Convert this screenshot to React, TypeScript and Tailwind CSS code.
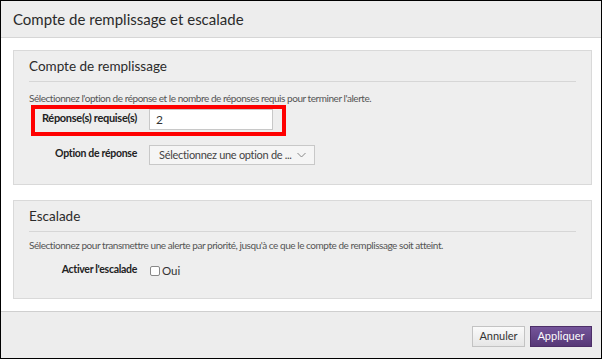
import React from "react";

export default function App() {
  const font = { fontFamily: "Lato, 'Open Sans', sans-serif" };
  return (
    <div style={font} className="w-[602px] h-[359px] border border-black bg-white flex flex-col text-[#333]">
      <div className="h-[37px] shrink-0 bg-[#ededed] border-b border-[#d6d6d6] flex items-center pl-[12px] text-[15px] text-[#2b2b2b]">
        Compte de remplissage et escalade
      </div>
      <div className="flex-1 pt-[12px] pl-[12px] pr-[9px] flex flex-col">
        <div className="h-[135px] bg-[#eeeeee] border border-[#d9d9d9] px-[15px] flex flex-col">
          <div className="h-[31px] shrink-0 border-b border-[#d6d6d6] flex items-center text-[13.5px] text-[#2b2b2b]">Compte de remplissage</div>
          <div className="mt-[9px] text-[10px] tracking-[-0.45px] leading-[14px] text-[#555] whitespace-nowrap">
            Sélectionnez l'option de réponse et le nombre de réponses requis pour terminer l'alerte.
          </div>
          <div className="relative mt-[4px] flex items-start h-[21px]">
            <div className="absolute left-[2px] -top-[4px] w-[255px] h-[31px] border-4 border-[#ff0000]" />
            <div className="w-[108px] flex justify-end whitespace-nowrap text-[11px] tracking-[-0.3px] font-bold leading-[18px] text-[#222]">Réponse(s) requise(s)</div>
            <div className="ml-[12px] w-[124px] h-[21px] bg-white border border-[#c8c8c8] flex items-center pl-[6px] text-[12px]">2</div>
          </div>
          <div className="mt-[15px] flex items-start h-[20px]">
            <div className="w-[108px] flex justify-end whitespace-nowrap text-[10.5px] tracking-[-0.3px] font-bold leading-[16px] text-[#222]">Option de réponse</div>
            <div className="ml-[12px] w-[166px] h-[20px] bg-[#f5f5f5] border border-[#c8c8c8] flex items-center pl-[9px] pr-[8px] text-[11px] tracking-[-0.3px] text-[#444] whitespace-nowrap">
              <span className="flex-1">Sélectionnez une option de ...</span>
              <svg width="9" height="6" viewBox="0 0 9 6" className="ml-[4px]">
                <path d="M0.5 1 L4.5 5 L8.5 1" stroke="#888" fill="none" strokeWidth="1" />
              </svg>
            </div>
          </div>
        </div>
        <div className="mt-[15px] h-[99px] bg-[#eeeeee] border border-[#d9d9d9] px-[15px] flex flex-col">
          <div className="h-[31px] shrink-0 border-b border-[#d6d6d6] flex items-center text-[13.5px] text-[#2b2b2b]">Escalade</div>
          <div className="mt-[6px] text-[10px] tracking-[-0.45px] leading-[14px] text-[#555] whitespace-nowrap">
            Sélectionnez pour transmettre une alerte par priorité, jusqu'à ce que le compte de remplissage soit atteint.
          </div>
          <div className="mt-[9px] flex items-start">
            <div className="w-[108px] flex justify-end whitespace-nowrap text-[10.5px] tracking-[-0.3px] font-bold leading-[16px] text-[#222]">Activer l'escalade</div>
            <div className="ml-[13px] flex items-center mt-[3px]">
              <div className="w-[10px] h-[10px] border border-[#888] rounded-[2px] bg-white" />
              <span className="ml-[2px] text-[11.5px] leading-[14px]">Oui</span>
            </div>
          </div>
        </div>
      </div>
      <div className="h-[47px] shrink-0 bg-[#ededed] border-t border-[#cfcfcf] flex items-center justify-end pr-[9px] gap-[5px] pt-[2px]">
        <button className="w-[53px] h-[21px] border border-[#c3c3c3] bg-gradient-to-b from-[#fafafa] to-[#e6e6e6] text-[11px] text-[#333]">Annuler</button>
        <button className="w-[62px] h-[21px] border border-[#4d2f68] bg-gradient-to-b from-[#74559a] to-[#573877] text-[11px] text-white">Appliquer</button>
      </div>
    </div>
  );
}
